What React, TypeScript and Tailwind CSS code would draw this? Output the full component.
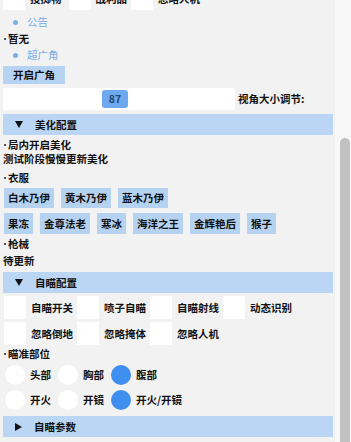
import React from "react";

const Box = () => <div className="w-[22px] h-[23px] bg-white shrink-0" />;

const Check = ({ label }: { label: string }) => (
  <div className="flex items-center mr-[4px]">
    <Box />
    <span className="ml-[5px] whitespace-nowrap">{label}</span>
  </div>
);

const Radio = ({ label, on }: { label: string; on?: boolean }) => (
  <div className="flex items-center mr-[7px]">
    <div className={`w-[20px] h-[20px] rounded-full shrink-0 ${on ? "bg-[#3f8ff0]" : "bg-white"}`} />
    <span className="ml-[5px] whitespace-nowrap">{label}</span>
  </div>
);

const Header = ({ label, open, className }: { label: string; open?: boolean; className: string }) => (
  <div className={`h-[21px] bg-[#bad6f4] flex items-center ${className}`}>
    {open ? (
      <svg width="8" height="7" viewBox="0 0 8 7" className="ml-[12px]">
        <polygon points="0,0 8,0 4,7" fill="#111" />
      </svg>
    ) : (
      <svg width="7" height="8" viewBox="0 0 7 8" className="ml-[12px]">
        <polygon points="0,0 7,4 0,8" fill="#111" />
      </svg>
    )}
    <span className="ml-[12px]">{label}</span>
  </div>
);

const Btn = ({ label }: { label: string }) => (
  <div className="h-full px-[4px] bg-[#b5d2f1] flex items-center whitespace-nowrap">{label}</div>
);

const Line = ({ children, className, dot }: { children: React.ReactNode; className: string; dot?: boolean }) => (
  <div className={`h-[14px] flex items-center whitespace-nowrap ${className}`}>
    {dot && <span className="w-[2px] h-[2px] rounded-full bg-[#222] ml-[1px] mr-[2px] shrink-0" />}
    {children}
  </div>
);

const Bullet = ({ label, className }: { label: string; className: string }) => (
  <div className={`h-[14px] flex items-center ${className}`}>
    <div className="w-[5px] h-[5px] rounded-full bg-[#7aaee6] ml-[10px]" />
    <span className="ml-[9px] text-[#78ace5] font-normal">{label}</span>
  </div>
);

export default function App() {
  return (
    <div className="w-[351px] h-[442px] overflow-hidden flex bg-[#f2f2f2] font-['Noto_Sans_CJK_SC','Noto_Sans',sans-serif] text-[10.5px] leading-[14px] font-bold text-[#111]">
      <div className="w-[335px] pl-[3px] pr-[2px] flex flex-col">
        <div className="-mt-[13px] h-[23px] flex items-center">
          <Check label="投掷物" />
          <div className="w-[3px]" />
          <Check label="战利品" />
          <Check label="忽略人机" />
        </div>
        <Bullet label="公告" className="mt-[5px]" />
        <Line className="mt-[3px]" dot>暂无</Line>
        <Bullet label="超广角" className="mt-[2px]" />
        <div className="mt-[4px] h-[18px] w-[62px] bg-[#b6d3f3] flex items-center justify-center">开启广角</div>
        <div className="mt-[4px] h-[22px] flex items-center">
          <div className="w-[232px] h-full bg-white flex items-center">
            <div className="ml-[99px] w-[26px] h-[18px] rounded-[3px] bg-[#6ea8ef] text-[#1f4574] flex items-center justify-center">87</div>
          </div>
          <span className="ml-[3px] whitespace-nowrap">视角大小调节:</span>
        </div>
        <Header label="美化配置" open className="mt-[4px]" />
        <Line className="mt-[3px]" dot>局内开启美化</Line>
        <Line className="mt-0">测试阶段慢慢更新美化</Line>
        <Line className="mt-[5px]" dot>衣服</Line>
        <div className="mt-[3px] h-[20px] flex gap-[7px] pl-[1px]">
          <Btn label="白木乃伊" />
          <Btn label="黄木乃伊" />
          <Btn label="蓝木乃伊" />
        </div>
        <div className="mt-[5px] h-[21px] flex gap-[7px] pl-[1px]">
          <Btn label="果冻" />
          <Btn label="金尊法老" />
          <Btn label="寒冰" />
          <Btn label="海洋之王" />
          <Btn label="金辉艳后" />
          <Btn label="猴子" />
        </div>
        <Line className="mt-[3px]" dot>枪械</Line>
        <Line className="mt-[3px]">待更新</Line>
        <Header label="自瞄配置" open className="mt-[4px]" />
        <div className="mt-[3px] h-[23px] flex items-center pl-[1px]">
          <Check label="自瞄开关" />
          <Check label="喷子自瞄" />
          <Check label="自瞄射线" />
          <Check label="动态识别" />
        </div>
        <div className="mt-[3px] h-[23px] flex items-center pl-[1px]">
          <Check label="忽略倒地" />
          <Check label="忽略掩体" />
          <Check label="忽略人机" />
        </div>
        <Line className="mt-[2px]" dot>瞄准部位</Line>
        <div className="mt-[4px] h-[20px] flex items-center pl-[2px]">
          <Radio label="头部" />
          <Radio label="胸部" />
          <Radio label="腹部" on />
        </div>
        <div className="mt-[5px] h-[20px] flex items-center pl-[2px]">
          <Radio label="开火" />
          <Radio label="开镜" />
          <Radio label="开火/开镜" on />
        </div>
        <Header label="自瞄参数" className="mt-[6px]" />
      </div>
      <div className="w-[16px] bg-[#f8f8f8] pl-[5px]">
        <div className="w-[10px] mt-[138px] h-[320px] rounded-full bg-[#c1c1c1]" />
      </div>
    </div>
  );
}
